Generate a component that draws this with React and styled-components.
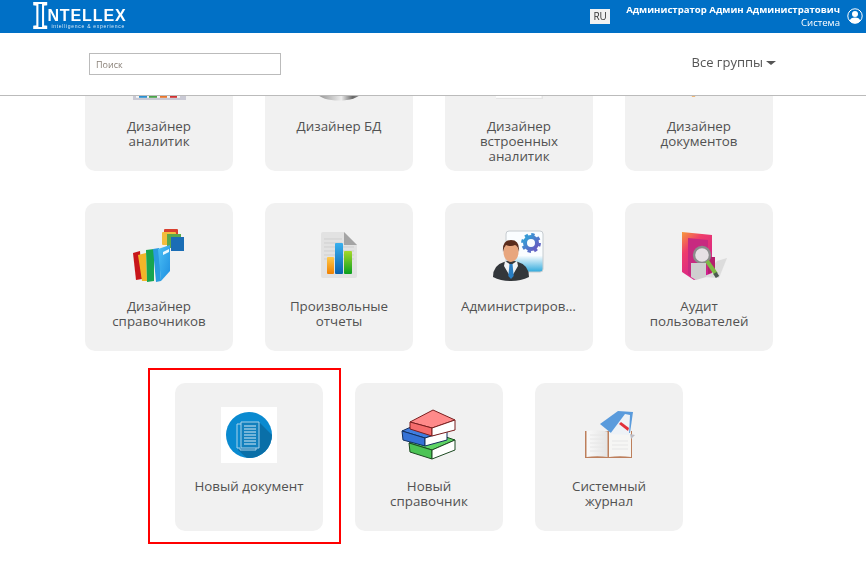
import React from "react";
import styled, { createGlobalStyle } from "styled-components";

const GlobalStyle = createGlobalStyle`
    html, body {
        margin: 0;
        height: 100%;
        overflow: hidden;
        background: #fff;
        font-family: "Open Sans", "Liberation Sans", sans-serif;
    }
`;

const Header = styled.header`
    position: fixed;
    top: 0;
    left: 0;
    right: 0;
    z-index: 10;
    background: #fff;
    border-bottom: 1px solid #bbb;
`;

const TopBar = styled.div`
    height: 33px;
    background: #0070c6;
    display: flex;
    align-items: center;
    padding: 0 3px 0 33px;
    color: #fff;
`;

const Logo = styled.div`
    display: flex;
    align-items: flex-start;
    height: 30px;
    margin-top: -1px;
    margin-right: auto;
`;

const LogoInitial = styled.span`
    font-family: "Liberation Serif", serif;
    font-weight: 700;
    font-size: 37px;
    line-height: 42px;
    margin-top: -6px;
    color: #0070c6;
    -webkit-text-stroke: 2px #fff;
`;

const LogoWords = styled.div`
    display: flex;
    flex-direction: column;
    padding-top: 8px;
`;

const LogoName = styled.span`
    font-family: "Liberation Sans", sans-serif;
    font-weight: 700;
    font-size: 16px;
    line-height: 14px;
    letter-spacing: 0.9px;
`;

const LogoSlogan = styled.span`
    font-family: "Liberation Sans", sans-serif;
    font-size: 5px;
    line-height: 7px;
    letter-spacing: 0.72px;
    padding-left: 4px;
    white-space: nowrap;
    opacity: 0.85;
`;

const LangButton = styled.div`
    width: 20px;
    height: 15px;
    margin-top: -1px;
    background: #f1f1f1;
    color: #333;
    font-size: 10px;
    line-height: 15px;
    text-align: center;
    margin-right: 16px;
`;

const UserInfo = styled.div`
    display: flex;
    flex-direction: column;
    align-items: flex-end;
    margin-right: 7px;
    margin-top: -2px;
    font-size: 9.6px;
    line-height: 13px;
`;

const UserName = styled.span`
    font-weight: 700;
`;

const UserIcon = styled.svg`
    width: 16px;
    height: 16px;
    margin-top: -2px;
`;

const SearchBar = styled.div`
    height: 62px;
    display: flex;
    align-items: center;
    justify-content: space-between;
    padding: 0 90px 0 89px;
`;

const SearchInput = styled.input`
    width: 192px;
    height: 22px;
    box-sizing: border-box;
    border: 1px solid #bbb;
    padding: 0 6px;
    font-family: inherit;
    font-size: 9px;
    outline: none;
    &::placeholder {
        color: #8a8178;
        opacity: 1;
    }
`;

const GroupsMenu = styled.div`
    display: flex;
    align-items: center;
    gap: 3px;
    margin-top: -4px;
    font-size: 13px;
    color: #555;
`;

const Caret = styled.span`
    width: 0;
    height: 0;
    margin-top: 2px;
    border-left: 5px solid transparent;
    border-right: 5px solid transparent;
    border-top: 4px solid #555;
`;

const Grid = styled.main`
    width: 720px;
    margin-left: 69px;
    padding-top: 7px;
    display: flex;
    flex-wrap: wrap;
    justify-content: center;
`;

const Card = styled.div`
    position: relative;
    width: 148px;
    height: 148px;
    margin: 16px;
    box-sizing: border-box;
    padding: 24px 16px 0;
    background: #f1f1f1;
    border-radius: 10px;
    display: flex;
    flex-direction: column;
    align-items: center;

    ${(p) =>
        p.$marked &&
        `&::after {
            content: "";
            position: absolute;
            left: -27px;
            top: -15px;
            right: -18px;
            bottom: -13px;
            border: 2px solid #f00;
        }`}
`;

const IconBox = styled.div`
    width: 56px;
    height: 56px;
    flex: none;
    margin-bottom: 16px;
    background: ${(p) => (p.$white ? "#fff" : "transparent")};

    svg {
        display: block;
        width: 56px;
        height: 56px;
    }
`;

const CardTitle = styled.div`
    width: 116px;
    text-align: center;
    font-size: 13.35px;
    line-height: 15px;
    color: #525252;

    ${(p) =>
        p.$clip &&
        `overflow: hidden;
        white-space: nowrap;
        text-overflow: ellipsis;`}
`;

const AnalyticsIcon = () => (
    <svg viewBox="0 0 56 56">
        <rect x="2" y="46" width="53" height="7" fill="#c9c9d4" />
        <rect x="5" y="48.8" width="44" height="2" fill="#f6f6f6" />
        <path d="M8 49.8h8" stroke="#2b8fd0" strokeWidth="2" />
        <path d="M18 49.8h8" stroke="#4aa34a" strokeWidth="2" />
        <path d="M29 49.8h7" stroke="#e8742a" strokeWidth="2" />
        <path d="M39 49.8h7" stroke="#d03030" strokeWidth="2" />
    </svg>
);

const DatabaseIcon = () => (
    <svg viewBox="0 0 56 56">
        <defs>
            <linearGradient id="dbMetal" x1="0" x2="1" y1="0" y2="0">
                <stop offset="0" stopColor="#8a8a8a" />
                <stop offset="0.55" stopColor="#ececec" />
                <stop offset="0.8" stopColor="#666" />
                <stop offset="1" stopColor="#999" />
            </linearGradient>
        </defs>
        <path d="M5 46h46c-4 5-12 7.5-23 7.5S9 51 5 46z" fill="url(#dbMetal)" />
    </svg>
);

const EmbeddedIcon = () => (
    <svg viewBox="0 0 56 56">
        <rect x="5" y="36" width="47" height="16" fill="#e4e4e4" />
        <rect x="5" y="36" width="45.5" height="14.8" fill="#fff" />
    </svg>
);

const DocumentsIcon = () => (
    <svg viewBox="0 0 56 56">
        <path d="M20 47h5l-1 3h-3z" fill="#f0b878" />
    </svg>
);

const CatalogIcon = () => (
    <svg viewBox="0 0 56 56">
        <defs>
            <linearGradient id="ctBlue" x1="0" x2="1" y1="0" y2="1">
                <stop offset="0" stopColor="#4cc0f5" />
                <stop offset="1" stopColor="#1e8ee0" />
            </linearGradient>
        </defs>
        <rect x="33" y="2" width="14" height="8" rx="1" fill="#d9402f" />
        <rect x="31" y="5" width="14" height="13" rx="1" fill="#f3bd3c" />
        <rect x="36" y="7" width="14" height="14" fill="#5aa84a" />
        <rect x="40" y="10" width="13" height="14" fill="#1a6db5" />
        <path d="M2 26l7-2 2 28-6 1z" fill="#c8161a" />
        <path d="M7 28l8-2 1 28-5 0z" fill="#f2b528" />
        <path d="M15 23l8-1v32l-7 1z" fill="#18a550" />
        <path d="M22 22l6-1 2 33-5 1z" fill="#2a9be0" />
        <path d="M27 22l12-4v26L30 54z" fill="url(#ctBlue)" />
        <path d="M32 25l6-3v3l-6 3z" fill="#eaf7fe" />
    </svg>
);

const ReportIcon = () => (
    <svg viewBox="0 0 56 56">
        <defs>
            <linearGradient id="rpOrange" x1="0" x2="0" y1="0" y2="1">
                <stop offset="0" stopColor="#ffc94a" />
                <stop offset="1" stopColor="#f08000" />
            </linearGradient>
            <linearGradient id="rpBlue" x1="0" x2="0" y1="0" y2="1">
                <stop offset="0" stopColor="#39b0ee" />
                <stop offset="1" stopColor="#0a62b0" />
            </linearGradient>
            <linearGradient id="rpGreen" x1="0" x2="0" y1="0" y2="1">
                <stop offset="0" stopColor="#a6d82a" />
                <stop offset="1" stopColor="#0aa020" />
            </linearGradient>
        </defs>
        <path d="M10 7q0-2 2-2h21l13 13v31q0 2-2 2H12q-2 0-2-2z" fill="#e2e2e2" />
        <path d="M33 5l13 13H33z" fill="#a4a4a4" />
        <path d="M13 12h18M13 16h18M13 20h30M13 24h30M13 28h30M13 32h30" stroke="#cfcfcf" />
        <rect x="16" y="30" width="7" height="17" rx="1" fill="url(#rpOrange)" />
        <rect x="24" y="16" width="8" height="31" rx="1" fill="url(#rpBlue)" />
        <rect x="33" y="24" width="8" height="23" rx="1" fill="url(#rpGreen)" />
    </svg>
);

const AdminIcon = () => (
    <svg viewBox="0 0 56 56">
        <defs>
            <linearGradient id="adPanel" x1="0" x2="0" y1="0" y2="1">
                <stop offset="0.6" stopColor="#fafdff" />
                <stop offset="1" stopColor="#2ea9dc" />
            </linearGradient>
            <linearGradient id="adGear" x1="0" x2="1" y1="0" y2="1">
                <stop offset="0" stopColor="#2fa4d8" />
                <stop offset="1" stopColor="#6a56c0" />
            </linearGradient>
        </defs>
        <rect x="15" y="4" width="37" height="41" rx="3" fill="url(#adPanel)" stroke="#c6ccd0" />
        <circle cx="40" cy="16" r="6" fill="none" stroke="url(#adGear)" strokeWidth="4" />
        <circle cx="40" cy="16" r="8.6" fill="none" stroke="url(#adGear)" strokeWidth="2.6" strokeDasharray="3.4 3.35" />
        <path d="M2 50q0-12 11-15l7-2 7 2q11 3 11 15-8 4-18 4T2 50z" fill="#33373b" />
        <path d="M14 34l6 4 6-4 1 5-7 12-7-12z" fill="#f1f3f5" />
        <path d="M18.5 37h3l1.200 12-2.700 3-2.700-3z" fill="#2a7fc4" />
        <ellipse cx="20" cy="25" rx="7.5" ry="10" fill="#e8a67e" />
        <path d="M12 25q-1-12 8-12t8 12q-1-6-4-7-4 2-9 0-2 2-3 7z" fill="#5a2c1c" />
    </svg>
);

const AuditIcon = () => (
    <svg viewBox="0 0 56 56">
        <defs>
            <linearGradient id="auFolder" x1="0" x2="0.6" y1="0" y2="1">
                <stop offset="0" stopColor="#f79a3a" />
                <stop offset="0.35" stopColor="#ee3c6c" />
                <stop offset="1" stopColor="#d01e90" />
            </linearGradient>
        </defs>
        <path d="M32 50l14-16 10-3-8 20z" fill="#cfcfcf" opacity="0.6" />
        <path d="M11 5l30 3v38l-18 7-12-8z" fill="url(#auFolder)" />
        <path d="M17 11l20 2v30l-14 8-6-4z" fill="#c72a80" />
        <path d="M37 30h7v14l-7 3z" fill="#b5206e" />
        <circle cx="31" cy="28" r="8" fill="#e6e0e4" stroke="#8c8c8c" strokeWidth="2.4" />
        <path d="M20 36l15 0v14l-10 3-5-3z" fill="#cfcfcf" />
        <path d="M36 34l9 13" stroke="#7dbb45" strokeWidth="4" />
        <path d="M44 46l2.5 4" stroke="#4c5a50" strokeWidth="4" />
    </svg>
);

const NewDocIcon = () => (
    <svg viewBox="0 0 56 56">
        <defs>
            <clipPath id="ndCircle">
                <circle cx="28" cy="28" r="23" />
            </clipPath>
        </defs>
        <circle cx="28" cy="28" r="23" fill="#0a8ad0" />
        <path d="M38 15l20 20v20H30L17 43z" fill="#0a6fa8" clipPath="url(#ndCircle)" />
        <path d="M20 17h-4v24h3v2h16v-2" fill="none" stroke="#a8d2ea" strokeWidth="1" />
        <path d="M20 15h18v26H20z" fill="#1280bd" stroke="#a8d2ea" strokeWidth="1" />
        <path d="M23 19h12M23 22h12M23 25h12M23 28h12M23 31h12M23 34h12M23 37h12" stroke="#d6eaf6" strokeWidth="1.2" />
    </svg>
);

const NewCatalogIcon = () => (
    <svg viewBox="0 0 56 56">
        <g strokeWidth="1" strokeLinejoin="round">
            <path d="M8 36l22-11 24 8-23 10z" fill="#5fd466" stroke="#1d4a22" />
            <path d="M8 36l23 7v9L9 45z" fill="#4cc455" stroke="#1d4a22" />
            <path d="M31 43l23-10v10l-23 9z" fill="#fff" stroke="#1d4a22" />
            <path d="M1 24l20-9 25 9-22 7z" fill="#3f7de0" stroke="#12305e" />
            <path d="M1 24l23 7v8L2 33z" fill="#3572d6" stroke="#12305e" />
            <path d="M24 31l22-7v9l-22 6z" fill="#fff" stroke="#12305e" />
            <path d="M9 15L32 3l22 10-23 8z" fill="#ff8a8a" stroke="#7a1f1f" />
            <path d="M9 15l22 6v8L9 22z" fill="#f56c6c" stroke="#7a1f1f" />
            <path d="M31 21l23-8v10l-23 6z" fill="#fff" stroke="#7a1f1f" />
        </g>
    </svg>
);

const JournalIcon = () => (
    <svg viewBox="0 0 56 56">
        <defs>
            <linearGradient id="jrPage" x1="0" x2="1" y1="0" y2="0">
                <stop offset="0" stopColor="#fafafa" />
                <stop offset="1" stopColor="#e4e4e4" />
            </linearGradient>
        </defs>
        <path d="M4 24h47v27H4z" fill="#bd7f5c" />
        <path d="M5.5 24q11-1.500 21 .5V50q-10-1.500-21 0z" fill="url(#jrPage)" />
        <path d="M50 24q-12-1.500-22 .5V50q11-1.500 22 0z" fill="#f6f6f4" />
        <path d="M9 28h14M9 32h14M9 36h14M9 40h14M9 44h14M31 34h16M31 38h16M31 42h16" stroke="#e6e6e6" />
        <path d="M19 17L37 4l15 1-3 21H30z" fill="#5a9bdc" />
        <path d="M29 27l15-20 5 1-1 20z" fill="#eef2f6" />
        <path d="M38 17l9 7 1-3-8-6z" fill="#e2303a" />
        <path d="M49 27l5 1-4 4z" fill="#bcbcc4" />
    </svg>
);

const items = [
    { title: "Дизайнер аналитик", Icon: AnalyticsIcon },
    { title: "Дизайнер БД", Icon: DatabaseIcon },
    { title: "Дизайнер встроенных аналитик", Icon: EmbeddedIcon },
    { title: "Дизайнер документов", Icon: DocumentsIcon },
    { title: "Дизайнер справочников", Icon: CatalogIcon },
    { title: "Произвольные отчеты", Icon: ReportIcon },
    { title: "Администрирование", Icon: AdminIcon, clip: true },
    { title: "Аудит пользователей", Icon: AuditIcon },
    { title: "Новый документ", Icon: NewDocIcon, marked: true, white: true },
    { title: "Новый справочник", Icon: NewCatalogIcon },
    { title: "Системный журнал", Icon: JournalIcon },
];

const App = () => {
    return (
        <>
            <GlobalStyle />
            <Header>
                <TopBar>
                    <Logo>
                        <LogoInitial>I</LogoInitial>
                        <LogoWords>
                            <LogoName>NTELLEX</LogoName>
                            <LogoSlogan>intelligence &amp; experience</LogoSlogan>
                        </LogoWords>
                    </Logo>
                    <LangButton>RU</LangButton>
                    <UserInfo>
                        <UserName>Администратор Админ Администратович</UserName>
                        <span>Система</span>
                    </UserInfo>
                    <UserIcon viewBox="0 0 16 16">
                        <circle cx="8" cy="8" r="7.2" fill="#0070c6" stroke="#fff" />
                        <circle cx="8" cy="6" r="3" fill="#fff" />
                        <path d="M2.6 13c.6-2.6 2.6-3.6 5.4-3.6s4.8 1 5.4 3.6a7 7 0 0 1-10.8 0z" fill="#fff" />
                    </UserIcon>
                </TopBar>
                <SearchBar>
                    <SearchInput placeholder="Поиск" />
                    <GroupsMenu>
                        Все группы <Caret />
                    </GroupsMenu>
                </SearchBar>
            </Header>
            <Grid>
                {items.map(({ title, Icon, marked, white, clip }) => (
                    <Card key={title} $marked={marked}>
                        <IconBox $white={white}>
                            <Icon />
                        </IconBox>
                        <CardTitle $clip={clip}>{title}</CardTitle>
                    </Card>
                ))}
            </Grid>
        </>
    );
};

export default App;
